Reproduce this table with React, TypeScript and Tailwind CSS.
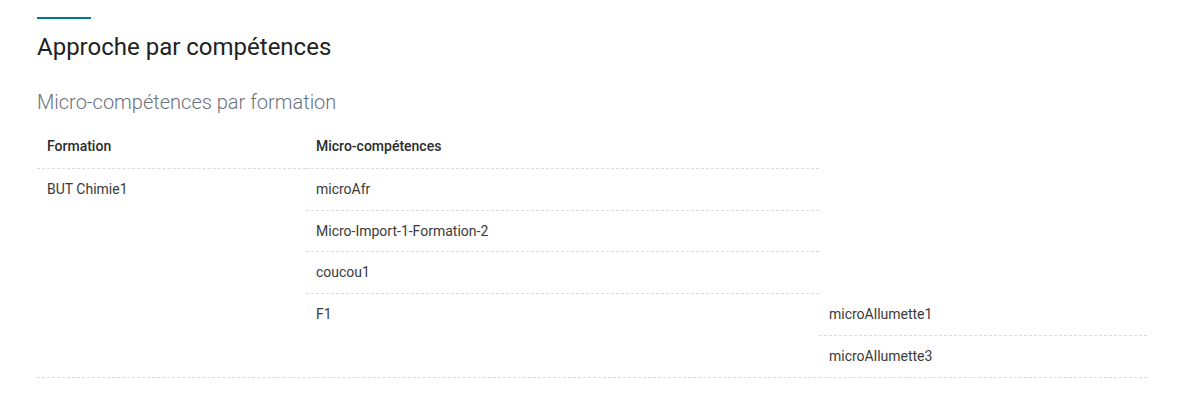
import React from "react";

type SousMicro = { id: string; nom: string };
type Micro = { id: string; nom: string; sous?: SousMicro[] };
type Formation = { id: string; nom: string; micros: Micro[] };

const formations: Formation[] = [
  {
    id: "f1",
    nom: "BUT Chimie1",
    micros: [
      { id: "m1", nom: "microAfr" },
      { id: "m2", nom: "Micro-Import-1-Formation-2" },
      { id: "m3", nom: "coucou1" },
      {
        id: "m4",
        nom: "F1",
        sous: [
          { id: "s1", nom: "microAllumette1" },
          { id: "s3", nom: "microAllumette3" },
        ],
      },
    ],
  },
];

const ligne = "border-b border-dashed border-[#dcdcdc]";
const cellule = "px-[10px] py-[12px] leading-[16.7px]";

export default function App() {
  return (
    <div className="min-h-screen bg-white font-['Roboto',sans-serif] text-[#212529]">
      <div className="ml-[37px] pt-[17px] w-[1110px]">
        <div className="w-[54px] h-[2px] bg-[#007b86]" />
        <h1 className="mt-[13px] text-[24px] leading-[30px] font-normal text-[#222]">
          Approche par compétences
        </h1>

        <h2 className="mt-[27px] text-[20px] leading-[26px] font-light text-[#6b7280]">
          Micro-compétences par formation
        </h2>

        {/* en-tête */}
        <div className="mt-[10px] flex w-[782px] text-[14px] font-medium text-[#2b2b2b]">
          <div className={`w-[269px] px-[10px] pt-[12px] pb-[13px] leading-[18px] ${ligne}`}>
            Formation
          </div>
          <div className={`flex-1 px-[10px] pt-[12px] pb-[13px] leading-[18px] ${ligne}`}>
            Micro-compétences
          </div>
        </div>

        {formations.map((f) => (
          <div key={f.id} className={`flex text-[14px] text-[#3a3a3a] ${ligne}`}>
            <div className={`w-[269px] ${cellule}`}>{f.nom}</div>
            <div className="flex-1 flex flex-col">
              {f.micros.map((m, i) => {
                const dernier = i === f.micros.length - 1;
                return (
                  <div key={m.id} className="flex">
                    <div className={`w-[513px] ${cellule} ${dernier ? "" : ligne}`}>
                      {m.nom}
                    </div>
                    {m.sous && (
                      <div className="flex-1 flex flex-col">
                        {m.sous.map((s, j) => (
                          <div
                            key={s.id}
                            className={`${cellule} ${
                              j === m.sous!.length - 1 ? "" : ligne
                            }`}
                          >
                            {s.nom}
                          </div>
                        ))}
                      </div>
                    )}
                  </div>
                );
              })}
            </div>
          </div>
        ))}
      </div>
    </div>
  );
}
